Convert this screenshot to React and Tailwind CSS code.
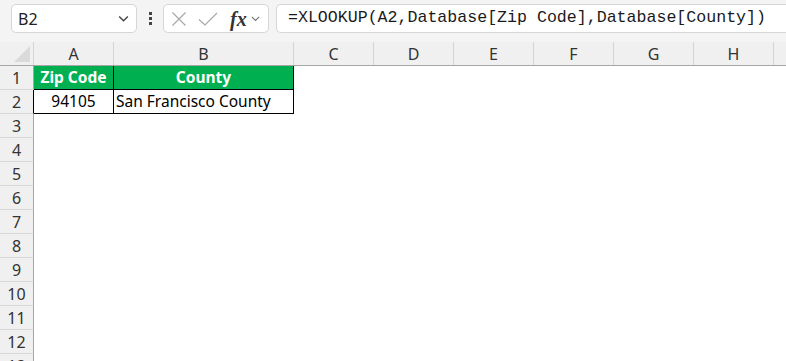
import React from 'react'

const COLS = [
  { id: 'A', w: 'w-[80px]' },
  { id: 'B', w: 'w-[180px]' },
  { id: 'C', w: 'w-[80px]' },
  { id: 'D', w: 'w-[80px]' },
  { id: 'E', w: 'w-[80px]' },
  { id: 'F', w: 'w-[80px]' },
  { id: 'G', w: 'w-[80px]' },
  { id: 'H', w: 'w-[80px]' },
  { id: '', w: 'w-[80px]' },
]

const ROWS = [1, 2, 3, 4, 5, 6, 7, 8, 9, 10, 11, 12, 13]

function Chevron({ className }) {
  return (
    <svg viewBox="0 0 12 12" className={className} fill="none" stroke="currentColor" strokeWidth="1.3">
      <path d="M2 4.2 6 8l4-3.8" />
    </svg>
  )
}

function Toolbar() {
  return (
    <div className="h-[42px] flex items-start pt-[4px] bg-[#f4f4f4]">
      {/* Name box */}
      <div className="ml-[11px] w-[126px] h-[29px] bg-white border border-[#d6d6d6] rounded-[5px] flex items-center pl-[6px] pr-[6px]">
        <span className="text-[16px] text-[#222] flex-1">B2</span>
        <Chevron className="w-[13px] h-[13px] text-[#444]" />
      </div>
      {/* dots */}
      <div className="w-[26px] h-[29px] flex flex-col items-center justify-center gap-[2px]">
        <div className="w-[3px] h-[3px] bg-[#444]" />
        <div className="w-[3px] h-[3px] bg-[#444]" />
        <div className="w-[3px] h-[3px] bg-[#444]" />
      </div>
      {/* function box */}
      <div className="w-[106px] h-[29px] bg-white border border-[#d6d6d6] rounded-[5px] flex items-center pl-[7px]">
        <svg viewBox="0 0 16 16" className="w-[16px] h-[16px] text-[#a8a8a8]" fill="none" stroke="currentColor" strokeWidth="1.2">
          <path d="M1.5 1.5 14.5 14.5M14.5 1.5 1.5 14.5" />
        </svg>
        <svg viewBox="0 0 20 16" className="ml-[11px] w-[20px] h-[16px] text-[#a8a8a8]" fill="none" stroke="currentColor" strokeWidth="1.2">
          <path d="M1 8.5 7 14 19 2" />
        </svg>
        <span className="ml-[12px] text-[20px] leading-none italic font-bold text-[#333] [font-family:'Liberation_Serif',serif]">fx</span>
        <Chevron className="ml-[3px] w-[11px] h-[11px] text-[#777]" />
      </div>
      {/* formula */}
      <div className="ml-[7px] flex-1 h-[29px] bg-white border border-[#d6d6d6] border-r-0 rounded-l-[5px] flex items-center pl-[11px]">
        <span className="text-[16.6px] text-[#1a1a1a] whitespace-nowrap [font-family:'Liberation_Mono',monospace]">
          =XLOOKUP(A2,Database[Zip Code],Database[County])
        </span>
      </div>
    </div>
  )
}

function HeaderRow() {
  return (
    <div className="flex h-[24px] bg-[#f0f0f0] border-b border-[#a6a6a6]">
      <div className="w-[34px] shrink-0 border-r border-[#d4d4d4] flex items-end justify-end pr-[3px] pb-[3px]">
        <div className="w-0 h-0 border-l-[16px] border-l-transparent border-b-[16px] border-b-[#dadada]" />
      </div>
      {COLS.map((c, i) => (
        <div
          key={i}
          className={`${c.w} shrink-0 border-r border-[#d4d4d4] flex items-center justify-center text-[16px] text-[#333]`}
        >
          {c.id}
        </div>
      ))}
    </div>
  )
}

function Row({ n }) {
  const isHead = n === 1
  const isData = n === 2
  return (
    <div className="flex h-[24px]">
      <div
        className={`w-[34px] shrink-0 bg-[#f0f0f0] border-b border-[#d8d8d8] border-r flex items-center justify-center text-[16px] text-[#333] ${isData ? 'border-r-black' : 'border-r-[#a6a6a6]'}`}
      >
        {n}
      </div>
      {COLS.map((c, i) => {
        if (isHead && c.id === 'A') {
          return (
            <div key={i} className={`${c.w} shrink-0 bg-[#00b050] border-r border-b border-black flex items-center justify-center text-[15.5px] font-bold text-white`}>
              Zip Code
            </div>
          )
        }
        if (isHead && c.id === 'B') {
          return (
            <div key={i} className={`${c.w} shrink-0 bg-[#00b050] border-r border-b border-black flex items-center justify-center text-[15.5px] font-bold text-white`}>
              County
            </div>
          )
        }
        if (isData && c.id === 'A') {
          return (
            <div key={i} className={`${c.w} shrink-0 border-r border-b border-black flex items-center justify-center text-[15.5px] text-black`}>
              94105
            </div>
          )
        }
        if (isData && c.id === 'B') {
          return (
            <div key={i} className={`${c.w} shrink-0 border-r border-b border-black flex items-center pl-[2px] text-[15.5px] text-black`}>
              San Francisco County
            </div>
          )
        }
        return <div key={i} className={`${c.w} shrink-0`} />
      })}
    </div>
  )
}

export default function App() {
  return (
    <div className="w-[786px] h-[361px] overflow-hidden bg-white [font-family:'Noto_Sans',sans-serif]">
      <Toolbar />
      <HeaderRow />
      {ROWS.map((n) => (
        <Row key={n} n={n} />
      ))}
    </div>
  )
}
